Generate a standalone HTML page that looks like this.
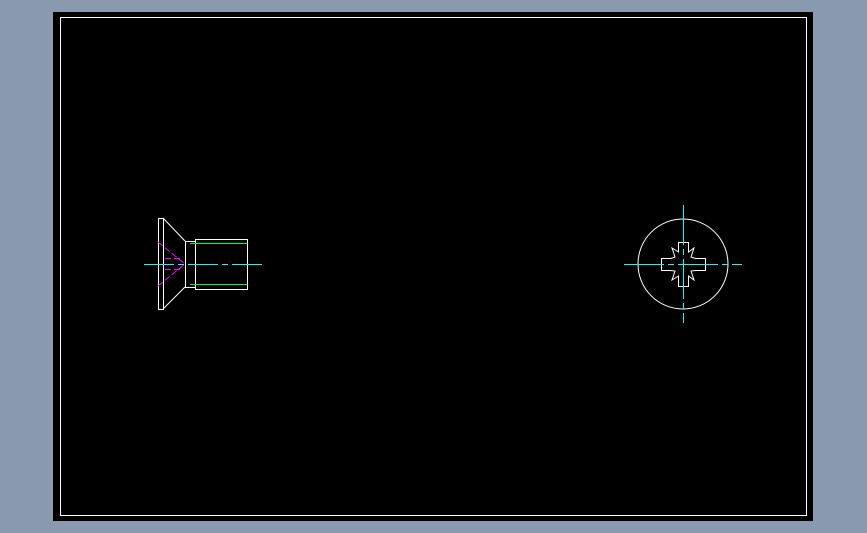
<html><body style="margin:0;width:867px;height:533px;background:#8a9aae;overflow:hidden">
<svg width="867" height="533" style="position:absolute;left:0;top:0" shape-rendering="crispEdges">
<rect x="53" y="12" width="760" height="509" fill="#000"/>
<rect x="60.5" y="17.5" width="746" height="498" fill="none" stroke="#fff"/>
<g fill="none" stroke="#fff" shape-rendering="auto" stroke-width="1">
<rect x="158.5" y="218.5" width="5" height="91"/>
<line x1="163" y1="218" x2="185" y2="241"/>
<line x1="163" y1="309" x2="185" y2="287"/>
<rect x="185.5" y="241.5" width="10" height="46"/>
<rect x="195.5" y="239.5" width="52" height="50"/>
</g>
<g stroke="#0f0"><line x1="190" y1="243.5" x2="247" y2="243.5"/><line x1="190" y1="284.5" x2="247" y2="284.5"/></g>
<g stroke="#f0f" fill="none" stroke-dasharray="6 3" shape-rendering="auto">
<line x1="158" y1="242" x2="185" y2="264"/><line x1="158" y1="286" x2="185" y2="264"/>
<line x1="165" y1="258.5" x2="182" y2="258.5"/><line x1="165" y1="269.5" x2="182" y2="269.5"/>
</g>
<line x1="144" y1="264.5" x2="262" y2="264.5" stroke="#0ff" stroke-dasharray="30 4 6 4"/>
<circle cx="683" cy="264" r="45" fill="none" stroke="#fff" shape-rendering="auto"/>
<g fill="none" stroke="#fff" shape-rendering="auto">
<path d="M678.5 252 V242.5 H688.5 V252 L694 248 L691 257 L695.5 258.5 H705.5 V270.5 H695.5 L691 271 L694 280 L688.5 276 V286.5 H678.5 V276 L672 280 L675 271 L670.5 270.5 H661.5 V258.5 H671 L675 257 L672 248 Z"/>
</g>
<g stroke="#0ff"><line x1="624" y1="264.5" x2="742" y2="264.5" stroke-dasharray="40 4 6 4"/><line x1="683.5" y1="205" x2="683.5" y2="323" stroke-dasharray="40 4 6 4"/></g>
</svg>
</body></html>
